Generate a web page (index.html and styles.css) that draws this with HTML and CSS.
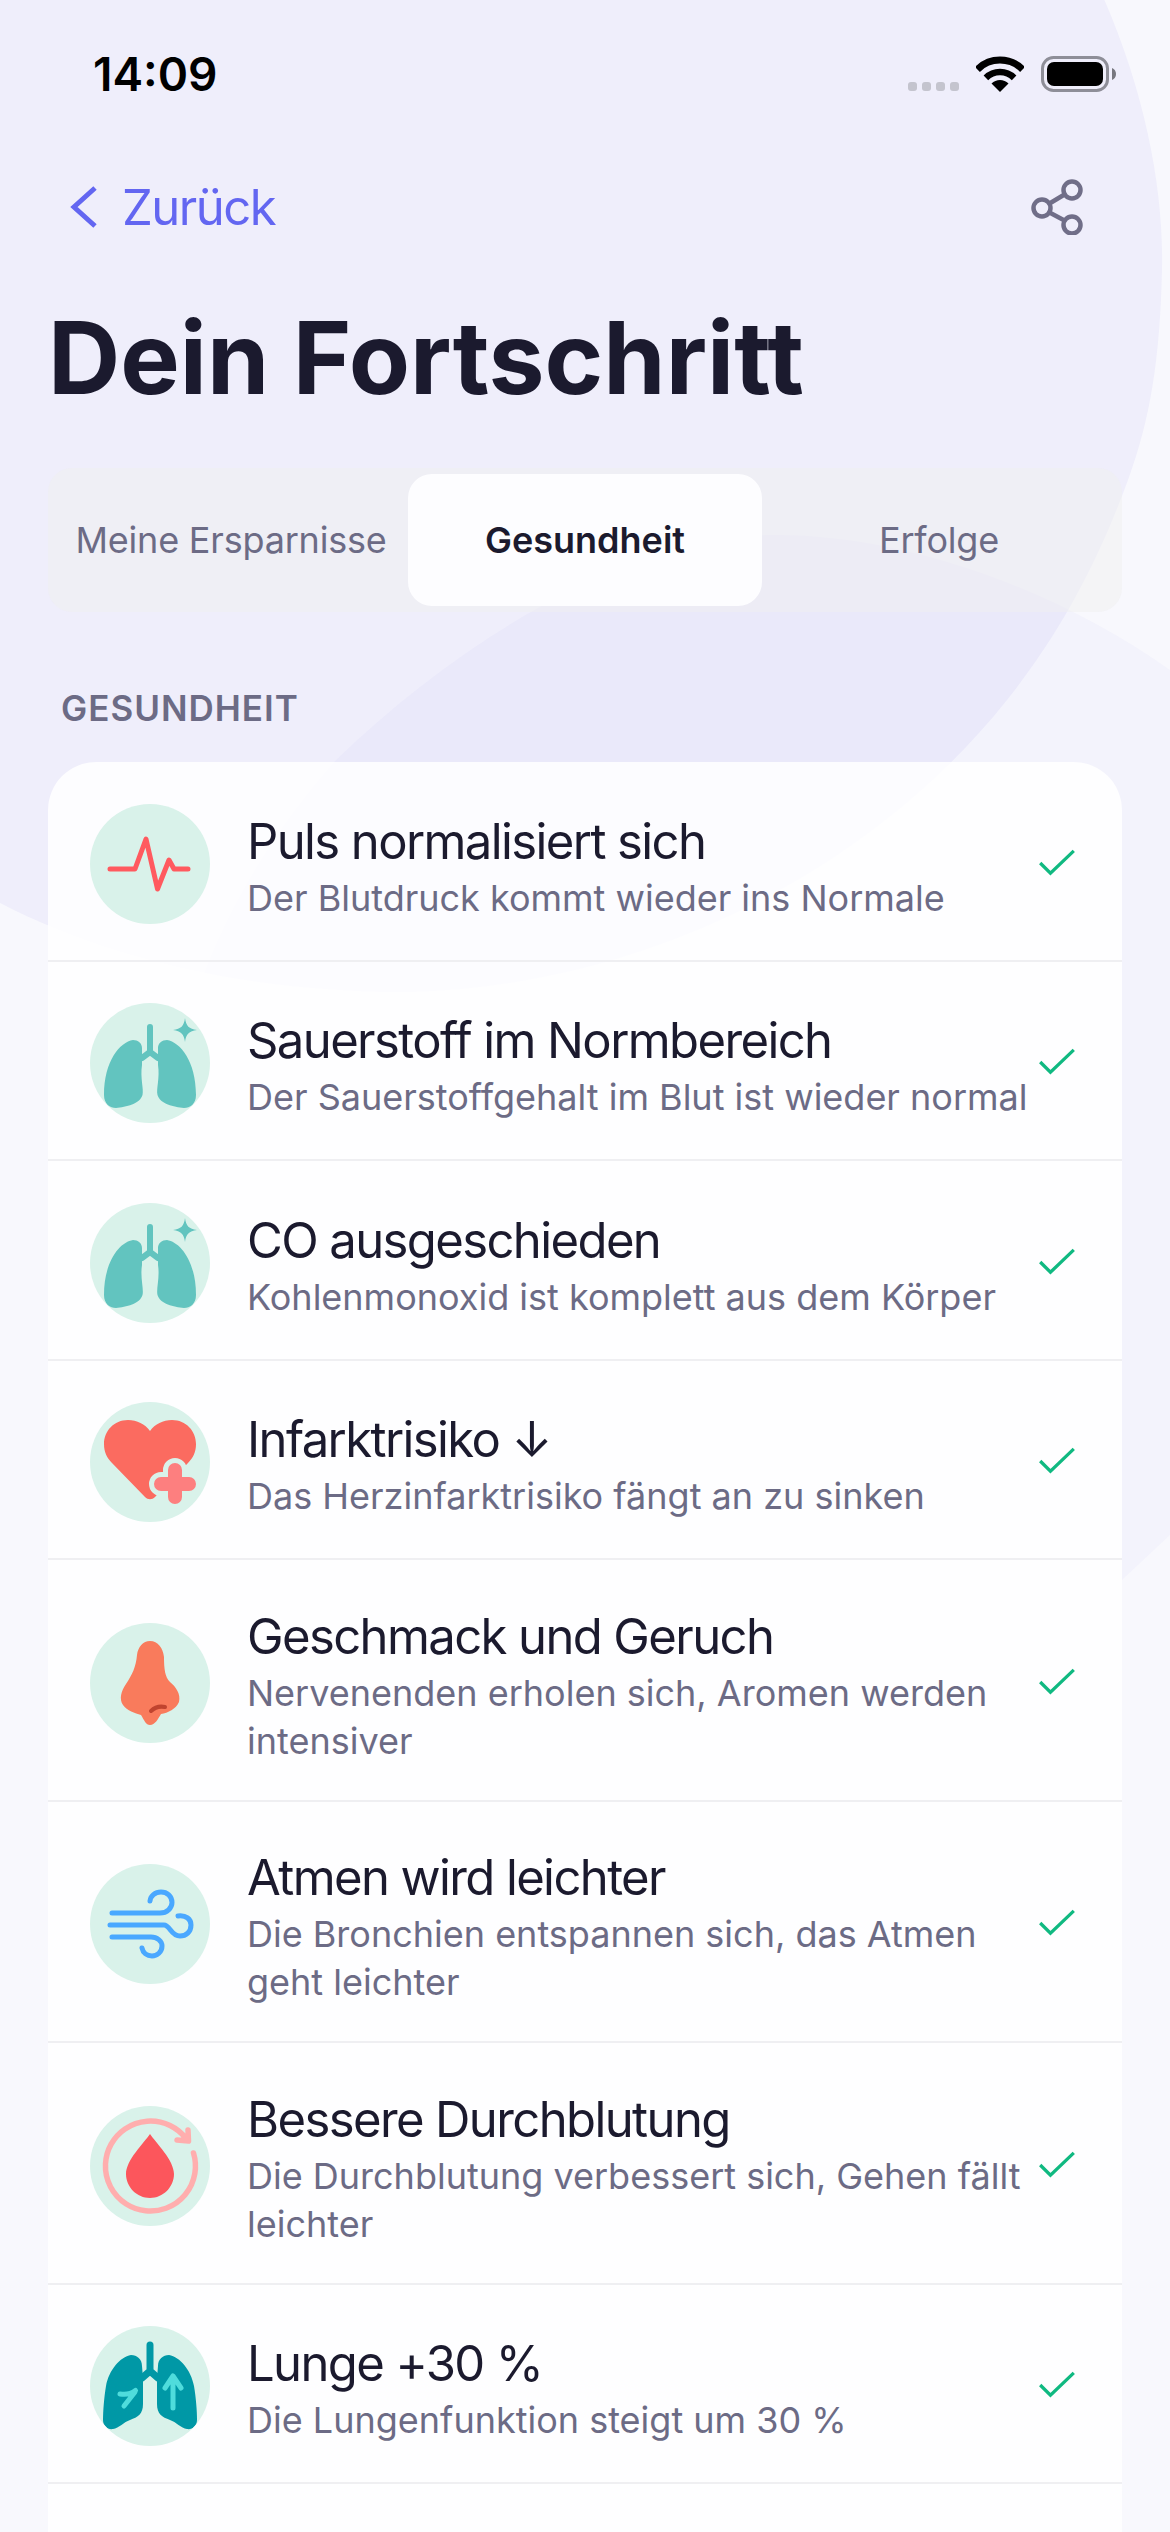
FILE: index.html
```html
<!DOCTYPE html>
<html lang="de">
<head>
  <meta charset="UTF-8">
  <meta name="viewport" content="width=device-width, initial-scale=1.0">
  <title>Dein Fortschritt</title>
  <link rel="stylesheet" href="styles.css">
</head>
<body>
  <svg class="backdrop" viewBox="0 0 1170 2532" aria-hidden="true">
    <path class="blob" d="M1100 -10 C1145 90 1164 190 1162 270 C1160 360 1150 420 1128 480 C1095 570 1055 640 1007 700 C880 860 660 985 410 992 C250 992 110 960 0 903 L-60 -10 Z"/>
    <path class="blob-soft" d="M1170 670 C1050 585 900 535 776 535 C640 535 470 630 336 760 C230 880 170 1020 170 1150 C170 1230 180 1310 227 1403 C300 1570 480 1720 700 1735 C850 1740 1000 1680 1122 1580 L1170 1535 L1230 1100 Z"/>
  </svg>

  <header class="status">
    <span class="time">14:09</span>
    <div class="status-icons">
      <div class="signal"><i></i><i></i><i></i><i></i></div>
      <svg class="wifi" width="48" height="36" viewBox="0 0 48 36">
        <path d="M1.4 13.4A32 32 0 0 1 46.6 13.4" fill="none" stroke="#000" stroke-width="7"/>
        <path d="M9.9 21.9A20 20 0 0 1 38.1 21.9" fill="none" stroke="#000" stroke-width="6.5"/>
        <path d="M24 36L15.5 27.5A12 12 0 0 1 32.5 27.5Z" fill="#000"/>
      </svg>
      <svg class="battery" width="76" height="36" viewBox="0 0 76 36">
        <rect x="1.5" y="1.5" width="65" height="33" rx="11" fill="none" stroke="#8e8e98" stroke-width="3"/>
        <rect x="6" y="6" width="56" height="24" rx="7" fill="#000"/>
        <path d="M71 12C73.500 13 75 15 75 18C75 21 73.500 23 71 24Z" fill="#77777f"/>
      </svg>
    </div>
  </header>

  <nav class="topnav">
    <a class="back">
      <svg width="28" height="44" viewBox="0 0 28 44"><path d="M25 3L4 22L25 41" fill="none" stroke="#6366f1" stroke-width="5"/></svg>
      <span>Zurück</span>
    </a>
    <svg class="share" width="54" height="56" viewBox="0 0 54 56" fill="none" stroke="#706e88" stroke-width="4.500">
      <circle cx="42" cy="11" r="8.500"/>
      <circle cx="12" cy="29" r="8.500"/>
      <circle cx="42" cy="46" r="8.500"/>
      <path d="M34.500 15.500L19.500 24.500M19.500 33.500L34.500 41.500"/>
    </svg>
  </nav>

  <h1>Dein Fortschritt</h1>

  <div class="tabs">
    <div class="tab">Meine Ersparnisse</div>
    <div class="tab active">Gesundheit</div>
    <div class="tab">Erfolge</div>
  </div>

  <h2>GESUNDHEIT</h2>

  <section class="card">
    <div class="row">
      <svg class="icon" viewBox="0 0 120 120">
        <path d="M20 65H45L56 35L67.500 85L79 56L84 65H98" fill="none" stroke="#ff5a5f" stroke-width="5" stroke-linecap="round" stroke-linejoin="round"/>
      </svg>
      <div class="text"><div class="name">Puls normalisiert sich</div><div class="desc">Der Blutdruck kommt wieder ins Normale</div></div>
      <svg class="check" viewBox="0 0 40 30"><path d="M2 15L13 26L38 2" fill="none" stroke="#10b981" stroke-width="3.500"/></svg>
    </div>

    <div class="row">
      <svg class="icon" viewBox="0 0 120 120"><use href="#lungs"/></svg>
      <div class="text"><div class="name">Sauerstoff im Normbereich</div><div class="desc">Der Sauerstoffgehalt im Blut ist wieder normal</div></div>
      <svg class="check" viewBox="0 0 40 30"><path d="M2 15L13 26L38 2" fill="none" stroke="#10b981" stroke-width="3.500"/></svg>
    </div>

    <div class="row">
      <svg class="icon" viewBox="0 0 120 120"><use href="#lungs"/></svg>
      <div class="text"><div class="name">CO ausgeschieden</div><div class="desc">Kohlenmonoxid ist komplett aus dem Körper</div></div>
      <svg class="check" viewBox="0 0 40 30"><path d="M2 15L13 26L38 2" fill="none" stroke="#10b981" stroke-width="3.500"/></svg>
    </div>

    <div class="row">
      <svg class="icon" viewBox="0 0 120 120">
        <path d="M60 29C55 22 47 18 38 18C24 18 14 29 14 42C14 50 17 56 22 61L55 95C58 98 62 98 65 95L98 61C103 56 106 50 106 42C106 29 96 18 82 18C73 18 65 22 60 29Z" fill="#fb6b60"/>
        <path d="M85 68V95M71 82H99" fill="none" stroke="#d9f2ea" stroke-width="24" stroke-linecap="round"/>
        <path d="M85 68V95M71 82H99" fill="none" stroke="#fd7f7f" stroke-width="14" stroke-linecap="round"/>
      </svg>
      <div class="text"><div class="name">Infarktrisiko ↓</div><div class="desc">Das Herzinfarktrisiko fängt an zu sinken</div></div>
      <svg class="check" viewBox="0 0 40 30"><path d="M2 15L13 26L38 2" fill="none" stroke="#10b981" stroke-width="3.500"/></svg>
    </div>

    <div class="row">
      <svg class="icon" viewBox="0 0 120 120">
        <path d="M60 18C53 18 48 24 47 32C46 44 42 52 36 61C31 68 29 76 33 82C37 88 45 90 51 92C54 97 56 102 60 102C65 102 68 96 71 91C78 90 86 86 89 79C91 71 86 64 80 59C75 54 74 46 74 34C73 25 68 18 60 18Z" fill="#f97b5c"/>
        <path d="M61 88C65 84 70 83 75 84" fill="none" stroke="#c0442f" stroke-width="4" stroke-linecap="round"/>
      </svg>
      <div class="text"><div class="name">Geschmack und Geruch</div><div class="desc">Nervenenden erholen sich, Aromen werden intensiver</div></div>
      <svg class="check" viewBox="0 0 40 30"><path d="M2 15L13 26L38 2" fill="none" stroke="#10b981" stroke-width="3.500"/></svg>
    </div>

    <div class="row">
      <svg class="icon" viewBox="0 0 120 120" fill="none" stroke="#4aa8ff" stroke-width="5" stroke-linecap="round">
        <path d="M22 49H70C77 49 82 44 82 38.500C82 32 77 28 71 28C65 28 60.500 32 60 37"/>
        <path d="M20 61H74C80 61 81 72 90 72C96 72 101 68 101 61C101 55 96 51 88 52"/>
        <path d="M22 73H61C67 73 72 77 72 82C72 88 67 92 62 92C57 92 53 89 52 84"/>
      </svg>
      <div class="text"><div class="name">Atmen wird leichter</div><div class="desc">Die Bronchien entspannen sich, das Atmen geht leichter</div></div>
      <svg class="check" viewBox="0 0 40 30"><path d="M2 15L13 26L38 2" fill="none" stroke="#10b981" stroke-width="3.500"/></svg>
    </div>

    <div class="row">
      <svg class="icon" viewBox="0 0 120 120">
        <path d="M103.500 47A45 45 0 1 1 96 32.500M98 24L98.500 35L87 34" fill="none" stroke="#ffaeae" stroke-width="5.500" stroke-linecap="round" stroke-linejoin="round"/>
        <path d="M60 28C66 37 84 54 84 68C84 81 73 92 60 92C47 92 36 81 36 68C36 54 54 37 60 28Z" fill="#fc565c"/>
      </svg>
      <div class="text"><div class="name">Bessere Durchblutung</div><div class="desc">Die Durchblutung verbessert sich, Gehen fällt leichter</div></div>
      <svg class="check" viewBox="0 0 40 30"><path d="M2 15L13 26L38 2" fill="none" stroke="#10b981" stroke-width="3.500"/></svg>
    </div>

    <div class="row">
      <svg class="icon" viewBox="0 0 120 120">
        <path d="M60 19V45M60 45L52 52M60 45L68 52" fill="none" stroke="#0098a6" stroke-width="7" stroke-linecap="round"/>
        <path d="M52 40C52 33 47 29 41 29C30 31 19 44 16 60C14 72 13 85 13 94C13 100 18 104 23 103C29 102 34 96 40 94C48 91 53 88 53 78V52Z" fill="#0098a6"/>
        <path d="M68 40C68 33 73 29 79 29C90 31 101 44 104 60C106 72 107 85 107 94C107 100 102 104 97 103C91 102 86 96 80 94C72 91 67 88 67 78V52Z" fill="#0098a6"/>
        <path d="M83 82V51M75 62L83 50L91 62M34 80L45 66M30 68C36 69 41 68 45.500 64.500" fill="none" stroke="#4fdcdc" stroke-width="5" stroke-linecap="round" stroke-linejoin="round"/>
      </svg>
      <div class="text"><div class="name">Lunge +30 %</div><div class="desc">Die Lungenfunktion steigt um 30 %</div></div>
      <svg class="check" viewBox="0 0 40 30"><path d="M2 15L13 26L38 2" fill="none" stroke="#10b981" stroke-width="3.500"/></svg>
    </div>
  </section>

  <svg class="sprite" aria-hidden="true">
    <symbol id="lungs" viewBox="0 0 120 120">
      <path d="M60 24V49M60 49L52 55M60 49L68 55" fill="none" stroke="#62c4bf" stroke-width="6" stroke-linecap="round"/>
      <path d="M52 45C52 40 48 37 43 37C30 39 14 58 14 92C14 101 20 105 26 105C36 104 50 101 52.500 92C54 86 50 75 52 62Z" fill="#62c4bf"/>
      <path d="M68 45C68 40 72 37 77 37C90 39 106 58 106 92C106 101 100 105 94 105C84 104 70 101 67.500 92C66 86 70 75 68 62Z" fill="#62c4bf"/>
      <path d="M95 15C96 23 99 26 107 27C99 28 96 31 95 39C94 31 91 28 83 27C91 26 94 23 95 15Z" fill="#62c4bf"/>
    </symbol>
  </svg>
</body>
</html>
```

FILE: styles.css
```css
html, body {
  margin: 0;
}
body {
  position: relative;
  display: flex;
  flex-direction: column;
  box-sizing: border-box;
  height: 2532px;
  padding: 0 48px;
  overflow: hidden;
  background-color: #f8f8fd;
  font-family: Inter, "Noto Sans", sans-serif;
  color: #1b1a2e;
}
.backdrop {
  position: absolute;
  top: 0;
  left: 0;
  width: 1170px;
  height: 2532px;
}
.blob {
  fill: #5a50dc;
  fill-opacity: 0.055;
}
.blob-soft {
  fill: #5a50dc;
  fill-opacity: 0.03;
}
.sprite {
  display: none;
}
.status, .topnav, h1, .tabs, h2, .card {
  position: relative;
  flex-shrink: 0;
}

/* status bar */
.status {
  display: flex;
  justify-content: space-between;
  align-items: center;
  height: 148px;
  padding: 0 5px 0 45px;
}
.time {
  font-size: 46px;
  font-weight: 600;
  color: #000;
}
.status-icons {
  display: flex;
  align-items: center;
}
.signal {
  display: flex;
  gap: 5px;
  margin-top: 25px;
  margin-right: 17px;
}
.signal i {
  width: 9px;
  height: 9px;
  border-radius: 3px;
  background-color: #c4c4ce;
}
.wifi {
  margin-top: -1px;
  margin-right: 17px;
}

/* back + share */
.topnav {
  display: flex;
  justify-content: space-between;
  align-items: center;
  height: 118px;
  padding: 0 38px 0 22px;
}
.back {
  display: flex;
  align-items: center;
  gap: 24px;
  font-size: 49px;
  letter-spacing: -1.5px;
  color: #6366f1;
}

h1 {
  margin: 32px 0 0;
  font-size: 100px;
  line-height: 120px;
  font-weight: 700;
}

.tabs {
  display: flex;
  box-sizing: border-box;
  height: 144px;
  margin-top: 50px;
  padding: 6px;
  border-radius: 24px;
  background-color: rgba(240, 240, 240, 0.5);
}
.tab {
  flex: 1;
  display: flex;
  justify-content: center;
  align-items: center;
  font-size: 36px;
  letter-spacing: -0.2px;
  color: #6c6b85;
}
.tab.active {
  border-radius: 24px;
  background-color: #fdfdff;
  font-weight: 600;
  letter-spacing: 0;
  color: #1b1a2e;
}

h2 {
  margin: 74px 0 0 13px;
  font-size: 35px;
  line-height: 44px;
  font-weight: 600;
  letter-spacing: 1px;
  color: #6c6b85;
}

.card {
  flex: 1;
  margin-top: 32px;
  border-radius: 48px 48px 0 0;
  background-color: rgba(255, 255, 255, 0.85);
}
.row {
  display: flex;
  align-items: center;
  box-sizing: border-box;
  min-height: 199.5px;
  padding: 40.750px 46px 34.750px 42px;
  border-bottom: 2px solid #efeff2;
}
.icon {
  flex-shrink: 0;
  width: 120px;
  height: 120px;
  margin-right: 37px;
  border-radius: 50%;
  background-color: #d9f2ea;
}
.text {
  flex: 1;
  padding-top: 4px;
}
.name {
  font-size: 49px;
  line-height: 64px;
  letter-spacing: -1.6px;
}
.desc {
  font-size: 36px;
  line-height: 48px;
  color: #6c6b85;
}
.check {
  flex-shrink: 0;
  width: 38px;
  height: 28px;
  margin: -2px 0 0 4px;
}
```
